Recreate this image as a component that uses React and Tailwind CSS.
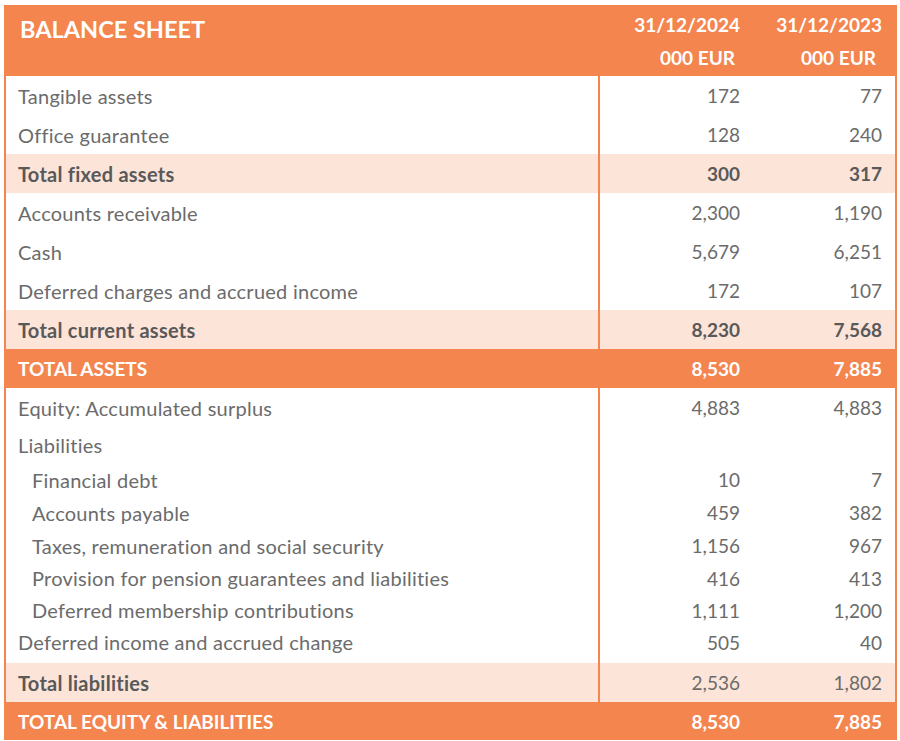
const rows = [
  { label: 'Tangible assets', a: '172', b: '77', h: 'h-[39px]' },
  { label: 'Office guarantee', a: '128', b: '240', h: 'h-[39px]' },
  { label: 'Total fixed assets', a: '300', b: '317', h: 'h-[39px]', kind: 'sub' },
  { label: 'Accounts receivable', a: '2,300', b: '1,190', h: 'h-[39px]' },
  { label: 'Cash', a: '5,679', b: '6,251', h: 'h-[39px]' },
  { label: 'Deferred charges and accrued income', a: '172', b: '107', h: 'h-[39px]' },
  { label: 'Total current assets', a: '8,230', b: '7,568', h: 'h-[39px]', kind: 'sub' },
  { label: 'TOTAL ASSETS', a: '8,530', b: '7,885', h: 'h-[39px]', kind: 'total' },
  { label: 'Equity: Accumulated surplus', a: '4,883', b: '4,883', h: 'h-[39px]' },
  { label: 'Liabilities', a: '', b: '', h: 'h-[36px]' },
  { label: 'Financial debt', a: '10', b: '7', h: 'h-[33px]', indent: true },
  { label: 'Accounts payable', a: '459', b: '382', h: 'h-[33px]', indent: true },
  { label: 'Taxes, remuneration and social security', a: '1,156', b: '967', h: 'h-[33px]', indent: true },
  { label: 'Provision for pension guarantees and liabilities', a: '416', b: '413', h: 'h-[32px]', indent: true },
  { label: 'Deferred membership contributions', a: '1,111', b: '1,200', h: 'h-[32px]', indent: true },
  { label: 'Deferred income and accrued change', a: '505', b: '40', h: 'h-[37px]', lift: true },
  { label: 'Total liabilities', a: '2,536', b: '1,802', h: 'h-[39px]', kind: 'sub', plain: true },
  { label: 'TOTAL EQUITY & LIABILITIES', a: '8,530', b: '7,885', h: 'h-[38px]', kind: 'total' },
];

const Row = ({ row }) => {
  const bg = row.kind === 'total' ? 'bg-[#F4854F]' : row.kind === 'sub' ? 'bg-[#FCE4D9]' : 'bg-white';
  const text = row.kind === 'total' ? 'text-white font-bold' : row.kind === 'sub' ? 'text-[#595959] font-bold' : 'text-[#6b6b6b]';
  const numText = row.plain ? 'font-normal text-[#6b6b6b]' : '';
  const labelSize = row.kind === 'total' ? 'text-[19px]' : 'text-[20px] tracking-[0.25px]';
  const lift = row.lift ? 'pb-[5px]' : '';
  return <div className={`grid grid-cols-[592px_152px_1fr] ${row.h} ${bg} ${text}`}>
      <div className={`flex items-center ${labelSize} ${lift} ${row.indent ? 'pl-[26px]' : 'pl-[12px]'}`}>{row.label}</div>
      <div className={`flex items-center justify-end pr-[10px] border-l-2 border-[#F4854F] ${lift} ${numText}`}>{row.a}</div>
      <div className={`flex items-center justify-end pr-[13px] ${lift} ${numText}`}>{row.b}</div>
    </div>;
};

export default function App() {
  return <div className="w-[900px] h-[741px] bg-white pt-[5px] pl-[4px]" style={{ fontFamily: 'Lato, "Open Sans", sans-serif' }}>
      <div className="w-[893px] border-x-2 border-[#F4854F] text-[19px] leading-none">
        <div className="grid grid-cols-[592px_152px_1fr] h-[71px] bg-[#F4854F] text-white font-bold">
          <div className="pl-[14px] pt-[13px] text-[23.5px]">BALANCE SHEET</div>
          <div className="flex flex-col items-end pr-[10px] pt-[10px]">
            <span>31/12/2024</span>
            <span className="mt-[14px] pr-[5px]">000 EUR</span>
          </div>
          <div className="flex flex-col items-end pr-[13px] pt-[10px]">
            <span>31/12/2023</span>
            <span className="mt-[14px] pr-[6px]">000 EUR</span>
          </div>
        </div>
        {rows.map((r, i) => <Row key={i} row={r} />)}
      </div>
    </div>;
}
